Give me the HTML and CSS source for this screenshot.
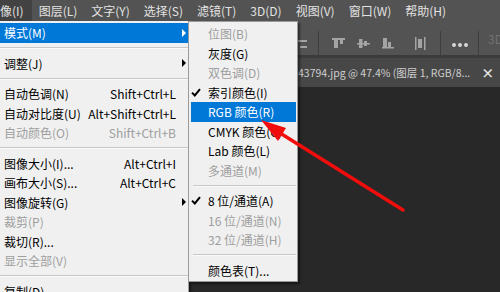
FILE: index.html
```html
<!DOCTYPE html>
<html>
  <head>
    <meta charset="utf-8" />
    <link rel="stylesheet" href="styles.css">
  </head>
  <body>
    <div class="app">
      <div class="menubar">
        <span class="mb-item mb-open"><span class="mb-cut">图像(I)</span></span>
        <span class="mb-item">图层(L)</span>
        <span class="mb-item">文字(Y)</span>
        <span class="mb-item">选择(S)</span>
        <span class="mb-item">滤镜(T)</span>
        <span class="mb-item">3D(D)</span>
        <span class="mb-item">视图(V)</span>
        <span class="mb-item">窗口(W)</span>
        <span class="mb-item">帮助(H)</span>
      </div>

      <div class="toolbar">
        <svg class="tool-icons" width="190" height="34" viewBox="0 0 190 34">
          <g fill="#a4a4a4">
            <rect x="1" y="19" width="10" height="2" />
            <rect x="4" y="25" width="7" height="2" />
            <rect x="36" y="17" width="13" height="2" />
            <rect x="38" y="18" width="4" height="9" />
            <rect x="44" y="18" width="3" height="5" />
            <rect x="61" y="22" width="13" height="1.5" />
            <rect x="63" y="18" width="3.5" height="9" />
            <rect x="68" y="20" width="3" height="5" />
            <rect x="86" y="26" width="12" height="1.5" />
            <rect x="87" y="17" width="4" height="9" />
            <rect x="92" y="21" width="3" height="5" />
            <rect x="119" y="16" width="1.5" height="13" />
            <rect x="128" y="16" width="1.5" height="13" />
            <rect x="122" y="18" width="4" height="9" />
          </g>
          <g fill="#3e3e3e">
            <rect x="22" y="10" width="1" height="24" />
            <rect x="144" y="10" width="1" height="24" />
            <rect x="182" y="10" width="1" height="24" />
          </g>
          <g fill="#d6d6d6">
            <circle cx="158" cy="24" r="2" />
            <circle cx="164" cy="24" r="2" />
            <circle cx="170" cy="24" r="2" />
          </g>
        </svg>
        <span class="tool-3d">3D</span>
      </div>

      <div class="tabbar">
        <span class="doc-title">43794.jpg @ 47.4% (图层 1, RGB/8...</span>
        <span class="doc-close">×</span>
      </div>

      <div class="canvas"></div>
    </div>

    <!-- 图像 menu -->
    <div class="menu main-menu">
      <div class="row active"><span class="label">模式(M)</span><span class="arrow light"></span></div>
      <div class="sep"></div>
      <div class="row"><span class="label">调整(J)</span><span class="arrow"></span></div>
      <div class="sep"></div>
      <div class="row"><span class="label">自动色调(N)</span><span class="key">Shift+Ctrl+L</span></div>
      <div class="row"><span class="label">自动对比度(U)</span><span class="key">Alt+Shift+Ctrl+L</span></div>
      <div class="row off"><span class="label">自动颜色(O)</span><span class="key">Shift+Ctrl+B</span></div>
      <div class="sep"></div>
      <div class="row"><span class="label">图像大小(I)...</span><span class="key">Alt+Ctrl+I</span></div>
      <div class="row"><span class="label">画布大小(S)...</span><span class="key">Alt+Ctrl+C</span></div>
      <div class="row"><span class="label">图像旋转(G)</span><span class="arrow"></span></div>
      <div class="row off"><span class="label">裁剪(P)</span></div>
      <div class="row"><span class="label">裁切(R)...</span></div>
      <div class="row off"><span class="label">显示全部(V)</span></div>
      <div class="sep"></div>
      <div class="row"><span class="label">复制(D)...</span></div>
    </div>

    <!-- 模式 submenu -->
    <div class="menu sub-menu">
      <div class="row off"><span class="tick"></span><span class="label">位图(B)</span></div>
      <div class="row"><span class="tick"></span><span class="label">灰度(G)</span></div>
      <div class="row off"><span class="tick"></span><span class="label">双色调(D)</span></div>
      <div class="row"><span class="tick"><svg width="10" height="9" viewBox="0 0 10 9"><path d="M1 4.6 L3.8 7.4 L9 1.2" fill="none" stroke="#000" stroke-width="2" /></svg></span><span class="label">索引颜色(I)</span></div>
      <div class="row active"><span class="tick"></span><span class="label">RGB 颜色(R)</span></div>
      <div class="row"><span class="tick"></span><span class="label">CMYK 颜色(C)</span></div>
      <div class="row"><span class="tick"></span><span class="label">Lab 颜色(L)</span></div>
      <div class="row off"><span class="tick"></span><span class="label">多通道(M)</span></div>
      <div class="sep"></div>
      <div class="row"><span class="tick"><svg width="10" height="9" viewBox="0 0 10 9"><path d="M1 4.6 L3.8 7.4 L9 1.2" fill="none" stroke="#000" stroke-width="2" /></svg></span><span class="label">8 位/通道(A)</span></div>
      <div class="row off"><span class="tick"></span><span class="label">16 位/通道(N)</span></div>
      <div class="row off"><span class="tick"></span><span class="label">32 位/通道(H)</span></div>
      <div class="sep"></div>
      <div class="row"><span class="tick"></span><span class="label">颜色表(T)...</span></div>
    </div>

    <svg class="annotation" width="500" height="292" viewBox="0 0 500 292">
      <line x1="403" y1="210" x2="280" y2="133" stroke="#f20d0d" stroke-width="3.5" stroke-linecap="round" />
      <polygon points="261,120 286,128 278,141" fill="#f20d0d" />
    </svg>
  </body>
</html>
```

FILE: styles.css
```css
body {
  margin: 0;
  width: 500px;
  height: 292px;
  overflow: hidden;
  position: relative;
  font-family: "Noto Sans CJK SC", "Noto Sans", sans-serif;
  font-size: 12px;
}

.app {
  display: flex;
  flex-direction: column;
  height: 292px;
  background-color: #282828;
}

/* top menu bar */
.menubar {
  display: flex;
  height: 21px;
  background-color: #535353;
  color: #e2e2e2;
  line-height: 21px;
  white-space: nowrap;
}

.mb-item {
  padding: 0 7px;
}

.mb-open {
  padding: 0 8px 0 0;
  background-color: #424242;
  overflow: hidden;
}

.mb-cut {
  display: inline-block;
  margin-left: -12px;
}

/* options bar */
.toolbar {
  display: flex;
  align-items: center;
  height: 34px;
  padding-left: 296px;
  background-color: #535353;
  border-bottom: 3px solid #3b3b3b;
  white-space: nowrap;
  overflow: hidden;
}

.tool-icons {
  display: block;
  flex-shrink: 0;
}

.tool-3d {
  margin-left: 2px;
  color: #727272;
}

/* document tab */
.tabbar {
  display: flex;
  align-items: center;
  height: 29px;
  padding-left: 298px;
  background-color: #474747;
  color: #cfcfcf;
  font-size: 10.5px;
  white-space: nowrap;
}

.doc-close {
  margin-left: 11px;
  color: #e8e8e8;
  font-size: 13px;
  font-weight: bold;
}

.canvas {
  flex: 1;
  background-color: #282828;
}

/* dropdown menus */
.menu {
  position: absolute;
  top: 21px;
  background-color: #f0f0f0;
  color: #000;
  box-shadow: 2px 2px 2px rgba(0, 0, 0, 0.45);
}

.main-menu {
  left: 0;
  width: 188px;
  height: 269px;
  padding-top: 2px;
  border-right: 1px solid #a0a0a0;
  overflow: hidden;
}

.sub-menu {
  left: 188px;
  width: 106px;
  padding: 2px 1px 1px 1px;
  border: 1px solid #9a9a9a;
}

.row {
  display: flex;
  align-items: center;
  height: 19.5px;
  white-space: nowrap;
}

.main-menu .row {
  padding: 0 2px 0 4px;
}

.row .label {
  flex: 1;
}

.row .key {
  margin-right: 10px;
}

.row.off {
  color: #9e9e9e;
}

.row.active {
  background-color: #0078d7;
  color: #fff;
}

.sub-menu .row.active {
  margin-left: 1px;
}

.sub-menu .row.active .tick {
  width: 17px;
}

.tick {
  width: 18px;
  display: flex;
  align-items: center;
}

.tick svg {
  margin-left: 1px;
}

.arrow {
  width: 0;
  height: 0;
  border-top: 4.5px solid transparent;
  border-bottom: 4.5px solid transparent;
  border-left: 4px solid #000;
}

.arrow.light {
  border-left-color: #fff;
}

.sep {
  height: 11px;
  display: flex;
  align-items: center;
}

.sep::after {
  content: "";
  flex: 1;
  height: 1px;
  border-top: 1px solid #c8c8c8;
  background-color: #fafafa;
}

.sub-menu .sep::after {
  margin-left: 3px;
}

.annotation {
  position: absolute;
  left: 0;
  top: 0;
  pointer-events: none;
}
```
